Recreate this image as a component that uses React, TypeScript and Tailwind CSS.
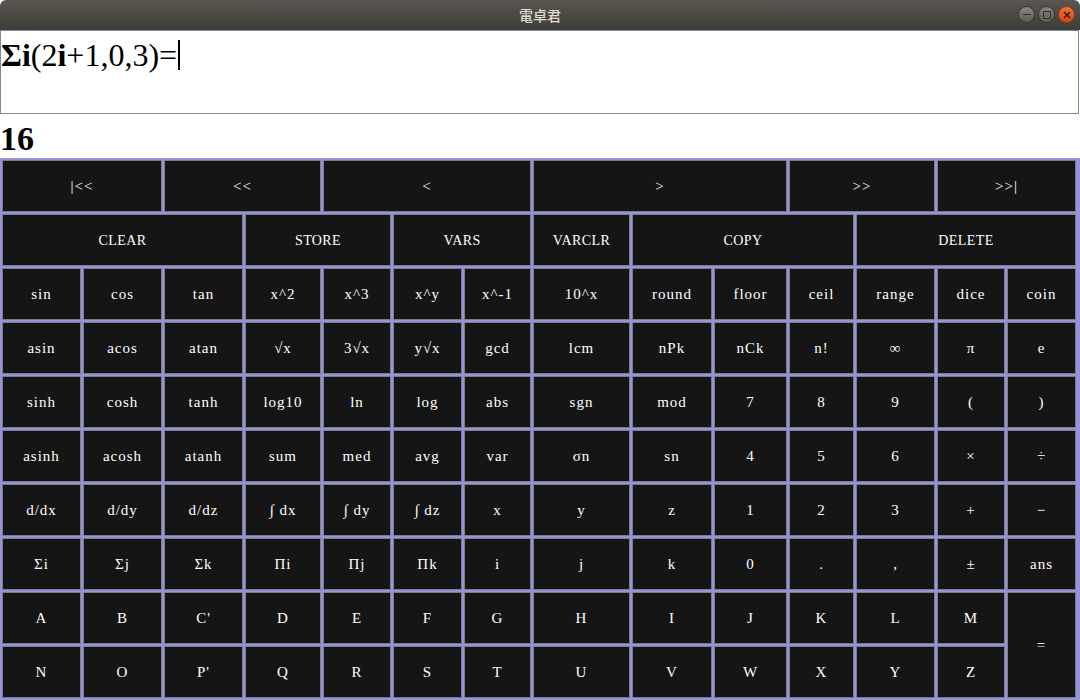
import React from "react";

type Cell = { t: string; c?: number; r?: number; ls?: boolean };

const rows: Cell[][] = [
  [
    { t: "|<<", c: 2 },
    { t: "<<", c: 2 },
    { t: "<", c: 3 },
    { t: ">", c: 3 },
    { t: ">>", c: 2 },
    { t: ">>|", c: 2 },
  ],
  [
    { t: "CLEAR", c: 3, ls: true },
    { t: "STORE", c: 2, ls: true },
    { t: "VARS", c: 2, ls: true },
    { t: "VARCLR", c: 1, ls: true },
    { t: "COPY", c: 3, ls: true },
    { t: "DELETE", c: 3, ls: true },
  ],
  ["sin", "cos", "tan", "x^2", "x^3", "x^y", "x^-1", "10^x", "round", "floor", "ceil", "range", "dice", "coin"].map((t) => ({ t })),
  ["asin", "acos", "atan", "√x", "3√x", "y√x", "gcd", "lcm", "nPk", "nCk", "n!", "∞", "π", "e"].map((t) => ({ t })),
  ["sinh", "cosh", "tanh", "log10", "ln", "log", "abs", "sgn", "mod", "7", "8", "9", "(", ")"].map((t) => ({ t })),
  ["asinh", "acosh", "atanh", "sum", "med", "avg", "var", "σn", "sn", "4", "5", "6", "×", "÷"].map((t) => ({ t })),
  ["d/dx", "d/dy", "d/dz", "∫ dx", "∫ dy", "∫ dz", "x", "y", "z", "1", "2", "3", "+", "−"].map((t) => ({ t })),
  ["Σi", "Σj", "Σk", "Πi", "Πj", "Πk", "i", "j", "k", "0", ".", ",", "±", "ans"].map((t) => ({ t })),
  [
    ...["A", "B", "C'", "D", "E", "F", "G", "H", "I", "J", "K", "L", "M"].map((t) => ({ t })),
    { t: "=", r: 2 },
  ],
  ["N", "O", "P'", "Q", "R", "S", "T", "U", "V", "W", "X", "Y", "Z"].map((t) => ({ t })),
];

const colSpan: Record<number, string> = {
  1: "col-span-1",
  2: "col-span-2",
  3: "col-span-3",
};

function Btn({ cell }: { cell: Cell }) {
  const cs = colSpan[cell.c ?? 1];
  const rs = cell.r === 2 ? "row-span-2" : "";
  return (
    <div
      className={`${cs} ${rs} flex items-center justify-center border border-[#7c7c88] bg-[#151515] text-white ${
        cell.ls ? "tracking-[0.4px] text-[14px]" : "tracking-[1px] text-[15px]"
      }`}
      style={{ fontFamily: '"Liberation Serif", "DejaVu Serif", serif' }}
    >
      {cell.t}
    </div>
  );
}

export default function App() {
  return (
    <div className="w-[1080px] h-[700px] overflow-hidden bg-white flex flex-col">
      {/* Title bar */}
      <div className="relative h-[30px] shrink-0 rounded-t-[6px] bg-gradient-to-b from-[#5a5750] to-[#3d3c38] flex items-center justify-center">
        <span
          className="text-[14px] font-medium text-[#dfdbd2]"
          style={{ fontFamily: '"Noto Sans CJK JP", "Noto Sans", sans-serif' }}
        >
          電卓君
        </span>
        <div className="absolute right-[5px] top-[6px] flex gap-[3px]">
          <div className="w-[17px] h-[17px] rounded-full border border-[#333] bg-gradient-to-b from-[#8a8780] to-[#5e5c57] flex items-center justify-center">
            <div className="w-[8px] h-[1.5px] bg-[#2e2d2a]" />
          </div>
          <div className="w-[17px] h-[17px] rounded-full border border-[#333] bg-gradient-to-b from-[#8a8780] to-[#5e5c57] flex items-center justify-center">
            <div className="w-[8px] h-[8px] border border-[#2e2d2a]" />
          </div>
          <div className="w-[17px] h-[17px] rounded-full border border-[#9a3510] bg-gradient-to-b from-[#f0703c] to-[#d9461a] flex items-center justify-center">
            <svg width="8" height="8" viewBox="0 0 8 8">
              <path d="M1 1L7 7M7 1L1 7" stroke="#3a1a0c" strokeWidth="1.5" />
            </svg>
          </div>
        </div>
      </div>

      {/* Input */}
      <div className="h-[84px] w-[1079px] shrink-0 border border-[#7d8994] bg-white px-0 pt-[7px]">
        <div
          className="flex items-center text-[32px] leading-[34px] text-black"
          style={{ fontFamily: '"Liberation Serif", "Times New Roman", serif' }}
        >
          <span className="font-bold">Σi</span>
          <span>(2</span>
          <span className="font-bold">i</span>
          <span>+1,0,3)=</span>
          <span className="ml-[1px] inline-block w-[2px] h-[30px] bg-black" />
        </div>
      </div>

      {/* Result */}
      <div
        className="h-[44px] shrink-0 flex items-center pt-[5px] text-[34px] font-bold text-black"
        style={{ fontFamily: '"Liberation Serif", "Times New Roman", serif' }}
      >
        16
      </div>

      {/* Keypad */}
      <div className="flex-1 bg-[#9494d8] pl-[2px] pt-[2px]">
        <div className="grid grid-cols-[79px_79px_79px_76px_68px_69px_67px_97px_80px_73px_65px_79px_68px_69px] grid-rows-[repeat(10,52px)] gap-[2px]">
          {rows.map((row, i) =>
            row.map((cell, j) => <Btn key={`${i}-${j}`} cell={cell} />)
          )}
        </div>
      </div>
    </div>
  );
}
